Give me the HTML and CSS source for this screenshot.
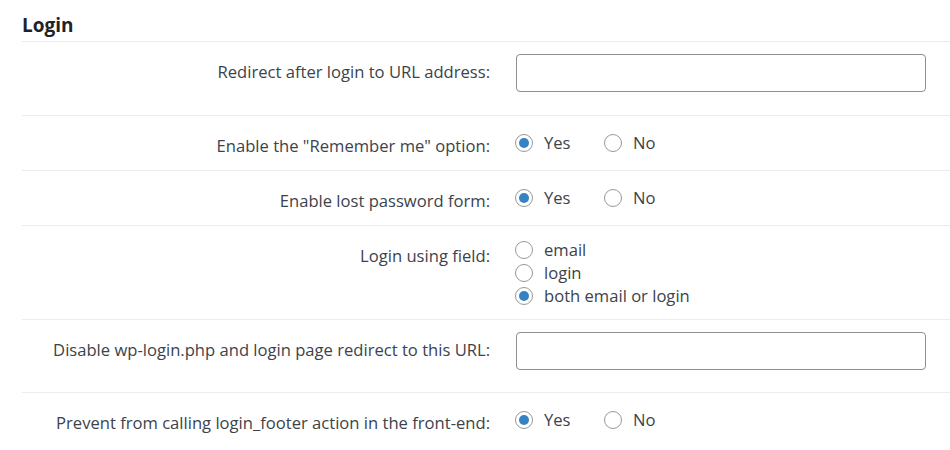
FILE: index.html
```html
<!DOCTYPE html>
<html lang="en">
  <head>
    <meta charset="UTF-8" />
    <meta name="viewport" content="width=device-width, initial-scale=1.0" />
    <title>Login settings</title>
    <link rel="stylesheet" href="styles.css">
  </head>
  <body>
    <div class="settings">
      <h2 class="section-title">Login</h2>

      <div class="form-table">
        <div class="row">
          <label class="row-label" for="redirectUrl">Redirect after login to URL address:</label>
          <div class="field field-text">
            <input type="text" id="redirectUrl" class="regular-text" />
          </div>
        </div>

        <div class="row">
          <div class="row-label">Enable the "Remember me" option:</div>
          <div class="field field-inline">
            <label class="choice choice-first"><input type="radio" name="remember" checked /> Yes</label>
            <label class="choice"><input type="radio" name="remember" /> No</label>
          </div>
        </div>

        <div class="row">
          <div class="row-label">Enable lost password form:</div>
          <div class="field field-inline">
            <label class="choice choice-first"><input type="radio" name="lostpass" checked /> Yes</label>
            <label class="choice"><input type="radio" name="lostpass" /> No</label>
          </div>
        </div>

        <div class="row">
          <div class="row-label">Login using field:</div>
          <div class="field field-stacked">
            <label class="choice"><input type="radio" name="loginfield" /> email</label>
            <label class="choice"><input type="radio" name="loginfield" /> login</label>
            <label class="choice"><input type="radio" name="loginfield" checked /> both email or login</label>
          </div>
        </div>

        <div class="row">
          <label class="row-label" for="wpLoginUrl">Disable wp-login.php and login page redirect to this URL:</label>
          <div class="field field-text field-text-last">
            <input type="text" id="wpLoginUrl" class="regular-text" />
          </div>
        </div>

        <div class="row">
          <div class="row-label">Prevent from calling login_footer action in the front-end:</div>
          <div class="field field-inline">
            <label class="choice choice-first"><input type="radio" name="footer" checked /> Yes</label>
            <label class="choice"><input type="radio" name="footer" /> No</label>
          </div>
        </div>
      </div>
    </div>
  </body>
</html>
```

FILE: styles.css
```css
body {
  margin: 0;
  padding: 0 0 0 22px;
  font-family: "Open Sans", "Noto Sans", Arial, sans-serif;
  font-size: 16.6px;
  color: #3c434a;
  background: #fff;
}
.section-title {
  margin: 0;
  padding: 13px 0 3px;
  font-size: 19px;
  line-height: 25px;
  font-weight: 700;
  color: #1d2327;
}
.row {
  display: grid;
  grid-template-columns: 468px 410px;
  column-gap: 25px;
  border-top: 1px solid #ececec;
}
.row-label {
  padding: 19px 0 13px;
  line-height: 22px;
  text-align: right;
}
.field-text {
  padding: 12px 0 23px;
}
.field-text .regular-text {
  margin-left: 1px;
}
.field-text-last {
  padding-bottom: 22px;
}
.field-inline {
  display: flex;
  padding: 13px 0;
  line-height: 24px;
}
.field-stacked {
  display: flex;
  flex-direction: column;
  padding: 12px 0;
  line-height: 23px;
}
.regular-text {
  display: block;
  box-sizing: border-box;
  width: 410px;
  height: 38px;
  margin: 0;
  padding: 0 8px;
  border: 1px solid #8c8f94;
  border-radius: 4px;
  font: inherit;
  color: #2c3338;
}
.choice {
  display: flex;
  align-items: center;
  gap: 11px;
  cursor: pointer;
}
.choice-first {
  min-width: 89px;
}
.choice input[type="radio"] {
  appearance: none;
  -webkit-appearance: none;
  box-sizing: border-box;
  width: 18px;
  height: 18px;
  margin: 0;
  border: 1px solid #999;
  border-radius: 50%;
  background: #fff;
  display: grid;
  place-content: center;
}
.choice input[type="radio"]:checked::before {
  content: "";
  width: 10px;
  height: 10px;
  border-radius: 50%;
  background: #3582c4;
}
```
